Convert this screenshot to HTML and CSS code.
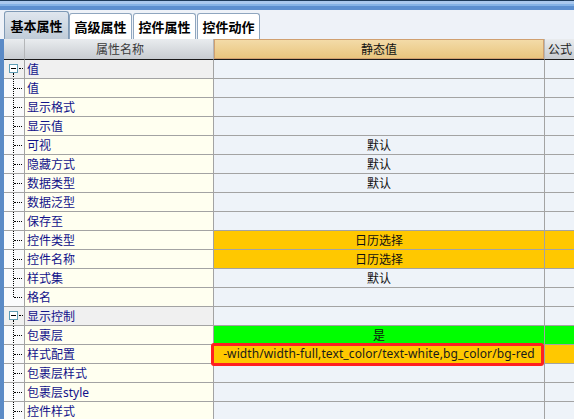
FILE: index.html
```html
<!DOCTYPE html>
<html>
<head>
<meta charset="utf-8">
<link rel="stylesheet" href="styles.css">
</head>
<body>
<div class="topbar"></div>
<div class="tabs">
  <div class="tab active">基本属性</div>
  <div class="tab">高级属性</div>
  <div class="tab">控件属性</div>
  <div class="tab">控件动作</div>
</div>
<div class="gridwrap">
  <div class="row head">
    <div class="c tree"></div>
    <div class="c name">属性名称</div>
    <div class="c val">静态值</div>
    <div class="c formula">公式</div>
  </div>
  <div class="row group">
    <div class="c tree"><span class="box"></span></div>
    <div class="c name">值</div>
    <div class="c val"></div>
    <div class="c formula"></div>
  </div>
  <div class="row">
    <div class="c tree child"></div>
    <div class="c name">值</div>
    <div class="c val"></div>
    <div class="c formula"></div>
  </div>
  <div class="row">
    <div class="c tree child"></div>
    <div class="c name">显示格式</div>
    <div class="c val"></div>
    <div class="c formula"></div>
  </div>
  <div class="row">
    <div class="c tree child"></div>
    <div class="c name">显示值</div>
    <div class="c val"></div>
    <div class="c formula"></div>
  </div>
  <div class="row">
    <div class="c tree child"></div>
    <div class="c name">可视</div>
    <div class="c val">默认</div>
    <div class="c formula"></div>
  </div>
  <div class="row">
    <div class="c tree child"></div>
    <div class="c name">隐藏方式</div>
    <div class="c val">默认</div>
    <div class="c formula"></div>
  </div>
  <div class="row">
    <div class="c tree child"></div>
    <div class="c name">数据类型</div>
    <div class="c val">默认</div>
    <div class="c formula"></div>
  </div>
  <div class="row">
    <div class="c tree child"></div>
    <div class="c name">数据泛型</div>
    <div class="c val"></div>
    <div class="c formula"></div>
  </div>
  <div class="row">
    <div class="c tree child"></div>
    <div class="c name">保存至</div>
    <div class="c val"></div>
    <div class="c formula"></div>
  </div>
  <div class="row orange">
    <div class="c tree child"></div>
    <div class="c name">控件类型</div>
    <div class="c val">日历选择</div>
    <div class="c formula"></div>
  </div>
  <div class="row orange">
    <div class="c tree child"></div>
    <div class="c name">控件名称</div>
    <div class="c val">日历选择</div>
    <div class="c formula"></div>
  </div>
  <div class="row">
    <div class="c tree child"></div>
    <div class="c name">样式集</div>
    <div class="c val">默认</div>
    <div class="c formula"></div>
  </div>
  <div class="row">
    <div class="c tree child last"></div>
    <div class="c name">格名</div>
    <div class="c val"></div>
    <div class="c formula"></div>
  </div>
  <div class="row group">
    <div class="c tree"><span class="box"></span></div>
    <div class="c name">显示控制</div>
    <div class="c val"></div>
    <div class="c formula"></div>
  </div>
  <div class="row green">
    <div class="c tree child"></div>
    <div class="c name">包裹层</div>
    <div class="c val">是</div>
    <div class="c formula"></div>
  </div>
  <div class="row orange">
    <div class="c tree child"></div>
    <div class="c name">样式配置</div>
    <div class="c val latin marked">-width/width-full,text_color/text-white,bg_color/bg-red</div>
    <div class="c formula"></div>
  </div>
  <div class="row">
    <div class="c tree child"></div>
    <div class="c name">包裹层样式</div>
    <div class="c val"></div>
    <div class="c formula"></div>
  </div>
  <div class="row">
    <div class="c tree child"></div>
    <div class="c name">包裹层<span class="latin">style</span></div>
    <div class="c val"></div>
    <div class="c formula"></div>
  </div>
  <div class="row">
    <div class="c tree child"></div>
    <div class="c name">控件样式</div>
    <div class="c val"></div>
    <div class="c formula"></div>
  </div>
</div>
</body>
</html>
```

FILE: styles.css
```css
html, body {
  margin: 0;
  padding: 0;
  height: 100%;
  overflow: hidden;
}
body {
  background: #eef2f8;
  font-family: "Noto Sans CJK SC", "Noto Sans", sans-serif;
  font-size: 12px;
  color: #111;
  display: flex;
  flex-direction: column;
}
.topbar {
  flex: none;
  height: 10px;
  background: linear-gradient(to bottom,
    #1d3b5c 0, #1d3b5c 1px,
    #a9c8ee 1px, #a9c8ee 4px,
    #84b2e6 4px, #84b2e6 6px,
    #5c8fd0 6px, #5c8fd0 10px);
}
.tabs {
  flex: none;
  display: flex;
  align-items: flex-end;
  padding: 1px 0 0 4px;
  height: 28px;
}
.tab {
  box-sizing: border-box;
  height: 26px;
  width: 63px;
  border: 1px solid #8fa6bf;
  border-bottom: none;
  border-radius: 3px 3px 0 0;
  background: #fff;
  font-weight: bold;
  font-size: 13px;
  color: #000;
  display: flex;
  align-items: center;
  justify-content: center;
  line-height: 1;
}
.tab.active {
  width: 65px;
  height: 28px;
  background: linear-gradient(to bottom, #dfe6ee, #c0ccd8);
  border-color: #7f9ab6;
}
.tab:nth-child(3), .tab:nth-child(4) { margin-left: 1px; }

.gridwrap {
  flex: 1;
  min-height: 0;
  overflow: hidden;
  border-left: 4px solid #5a8ac6;
}
.row {
  display: grid;
  grid-template-columns: 21px 189px 331px 1fr;
  height: 19px;
}
.c {
  box-sizing: border-box;
  border-right: 1px solid #a3a3a3;
  border-bottom: 1px solid #a3a3a3;
  line-height: 17px;
  white-space: nowrap;
  overflow: hidden;
  position: relative;
}
.row.head {
  height: 21px;
}
.head .c {
  background: linear-gradient(to bottom, #e9ecef, #c8ccd1);
  border-right-color: #b4b6b8;
  border-bottom: 1px solid #1a1a1a;
  line-height: 19px;
  color: #3a3a3a;
  text-align: center;
}
.head .val {
  background: linear-gradient(to bottom, #f4dcaa, #e8c47c);
  box-shadow: inset 0 0 0 1px #d0a070;
  color: #111;
}
.head .formula {
  text-align: left;
  padding-left: 3px;
  color: #222;
}
.name {
  background: #fffff0;
  color: #12128a;
  padding-left: 2px;
}
.tree {
  background: #fafbfc;
}
.val {
  background: #eef3f9;
  text-align: center;
  color: #111;
}
.formula {
  background: #eef3f9;
  border-right: none;
}
.group .name, .group .tree {
  background: #f0f0f0;
}
.orange .val, .orange .formula {
  background: #ffc800;
}
.green .val, .green .formula {
  background: #00ff00;
}
.latin {
  font-family: "Segoe UI", "Noto Sans", "Open Sans", sans-serif;
}
.val.latin {
  font-size: 12px;
  letter-spacing: 0.1px;
  color: #1a1a1a;
  overflow: visible;
}
.marked::after {
  content: "";
  position: absolute;
  top: -2px;
  bottom: -3px;
  left: -3px;
  right: 0;
  border: 3px solid #ff2020;
  border-radius: 3px;
  z-index: 2;
}
/* tree connectors */
.child::before {
  content: "";
  position: absolute;
  left: 9px;
  top: 0;
  bottom: -1px;
  border-left: 1px dotted #000;
}
.child.last::before {
  bottom: auto;
  height: 9px;
}
.child::after {
  content: "";
  position: absolute;
  left: 10px;
  top: 9px;
  width: 8px;
  border-top: 1px dotted #000;
}
.box {
  position: absolute;
  left: 5px;
  top: 4px;
  width: 9px;
  height: 9px;
  box-sizing: border-box;
  border: 1px solid #5e9cb4;
  background: #fff;
}
.box::before {
  content: "";
  position: absolute;
  left: 1px;
  top: 3px;
  width: 5px;
  height: 1px;
  background: #000;
}
.group .tree::after {
  content: "";
  position: absolute;
  left: 15px;
  top: 8px;
  width: 4px;
  border-top: 1px dotted #000;
}
.group .tree::before {
  content: "";
  position: absolute;
  left: 9px;
  top: 13px;
  bottom: -1px;
  border-left: 1px dotted #000;
}
```
